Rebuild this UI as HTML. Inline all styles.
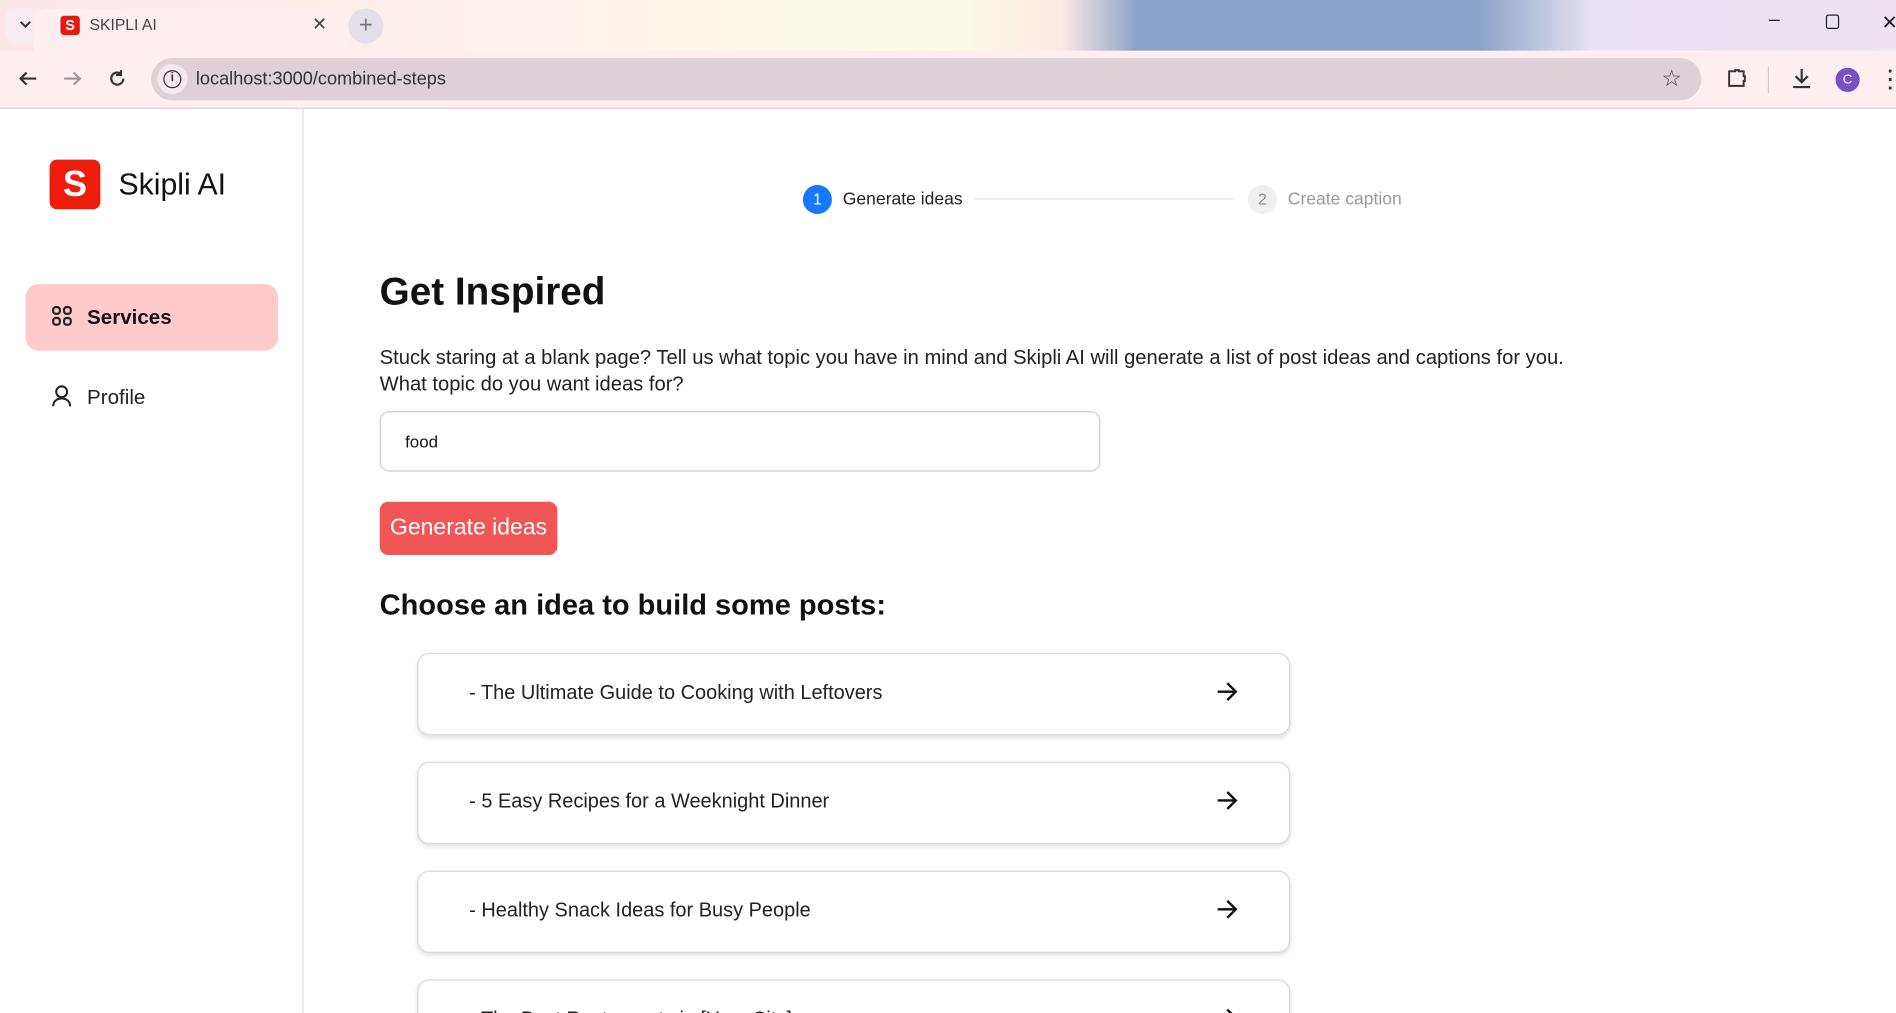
<!DOCTYPE html>
<html><head><meta charset="utf-8"><style>
*{box-sizing:border-box;margin:0;padding:0}
html,body{width:1896px;height:1013px;overflow:hidden;background:#fff;font-family:"Liberation Sans",sans-serif}
#w{width:1568px;height:838px;transform:scale(1.20918);transform-origin:0 0;position:relative;overflow:hidden}
.a{position:absolute}
.tabs{left:0;top:0;width:1568px;height:42px;background:linear-gradient(90deg,#fbe6ea 0%,#fdf3ec 30%,#f9fbe6 50%,#fde8e4 56%,#8ba3c7 60%,#8ba3c7 78%,#e9e2f3 84%,#ede3f2 100%)}
.bar{left:0;top:42px;width:1568px;height:48px;background:#fdeeef;border-bottom:1px solid #e2cdd3}
.card{left:345px;width:722px;height:68px;border:1px solid #d9d9d9;border-radius:10px;box-shadow:0 2px 4px rgba(0,0,0,.12);font-size:16.5px;color:#222;padding-left:42px;line-height:64px;background:#fff}
.card svg{position:absolute;right:42px;top:22px}
</style></head><body><div id="w">
<div class="a tabs"></div>
<div class="a" style="left:4px;top:6px;width:32px;height:30px;border-radius:10px;background:#f7ecf1"></div>
<svg class="a" style="left:15px;top:16px" width="12" height="8"><path d="M2 2l4 4 4-4" stroke="#333" stroke-width="1.6" fill="none"/></svg>
<div class="a" style="left:28px;top:7px;width:260px;height:36px;background:#fdeeef;border-radius:10px 10px 0 0"></div>
<div class="a" style="left:50px;top:13px;width:16px;height:16px;background:#e8190e;border-radius:3px;color:#fff;font-size:12px;font-weight:bold;text-align:center;line-height:16px">S</div>
<div class="a" style="left:74px;top:13px;font-size:13px;color:#444">SKIPLI AI</div>
<div class="a" style="left:258px;top:11px;font-size:15px;color:#444">✕</div>
<div class="a" style="left:288px;top:7px;width:29px;height:29px;border-radius:50%;background:#e3e0ea;color:#777;text-align:center;line-height:28px;font-size:20px">+</div>
<div class="a" style="left:1463px;top:8px;font-size:16px;color:#222">–</div>
<div class="a" style="left:1510px;top:12px;width:11px;height:12px;border:1.3px solid #222;border-radius:2px"></div>
<div class="a" style="left:1556px;top:9px;font-size:16px;color:#222">✕</div>
<div class="a bar"></div>
<svg class="a" style="left:14px;top:57px" width="18" height="16"><path d="M16 8H3M8 3L3 8l5 5" stroke="#333" stroke-width="1.8" fill="none"/></svg>
<svg class="a" style="left:51px;top:57px" width="18" height="16"><path d="M2 8h13M10 3l5 5-5 5" stroke="#999" stroke-width="1.8" fill="none"/></svg>
<svg class="a" style="left:89px;top:57px" width="16" height="16"><path d="M13 8a5 5 0 1 1-2-4M11 1v4h-4" stroke="#333" stroke-width="1.8" fill="none"/></svg>
<div class="a" style="left:125px;top:48px;width:1282px;height:35px;border-radius:18px;background:#ddd0d6"></div>
<div class="a" style="left:130px;top:53px;width:25px;height:25px;border-radius:50%;background:#f4e9ee"></div>
<div class="a" style="left:135px;top:58px;width:15px;height:15px;border-radius:50%;border:1.6px solid #333;font-size:10px;text-align:center;line-height:12px;font-weight:bold;color:#333">i</div>
<div class="a" style="left:162px;top:57px;font-size:15px;color:#333">localhost:3000/combined-steps</div>
<div class="a" style="left:1374px;top:54px;font-size:19px;color:#444">☆</div>
<svg class="a" style="left:1427px;top:56px" width="18" height="18"><path d="M3 3h5v-1h3v1h4v4h1v4h-1v4H3z" stroke="#333" stroke-width="1.6" fill="none"/></svg>
<div class="a" style="left:1462px;top:55px;width:1px;height:22px;background:#d6c8cc"></div>
<svg class="a" style="left:1481px;top:56px" width="18" height="18"><path d="M9 1v11M4 7l5 5 5-5M2 16h14" stroke="#333" stroke-width="1.8" fill="none"/></svg>
<div class="a" style="left:1518px;top:56px;width:20px;height:20px;border-radius:50%;background:#7b4fc4;color:#fff;font-size:11px;text-align:center;line-height:20px">C</div>
<div class="a" style="left:1561px;top:56px;font-size:16px;line-height:7px;color:#333;font-weight:bold">·<br>·<br>·</div>

<div class="a" style="left:250px;top:90px;width:1px;height:748px;background:#ddd"></div>
<div class="a" style="left:41px;top:132px;width:42px;height:41px;background:#ee1c0c;border-radius:6px;color:#fff;font-size:30px;font-weight:bold;text-align:center;line-height:41px">S</div>
<div class="a" style="left:98px;top:139px;font-size:25px;color:#111">Skipli AI</div>
<div class="a" style="left:21px;top:235px;width:209px;height:55px;background:#ffcaca;border-radius:11px"></div>
<svg class="a" style="left:43px;top:253px" width="17" height="17"><g stroke="#222" stroke-width="1.8" fill="none"><rect x="1" y="1" width="5.5" height="5.5" rx="2"/><rect x="10" y="1" width="5.5" height="5.5" rx="2"/><rect x="1" y="10" width="5.5" height="5.5" rx="2"/><rect x="10" y="10" width="5.5" height="5.5" rx="2"/></g></svg>
<div class="a" style="left:72px;top:253px;font-size:17px;font-weight:bold;color:#111">Services</div>
<svg class="a" style="left:42px;top:318px" width="18" height="19"><g stroke="#222" stroke-width="1.7" fill="none"><circle cx="9" cy="6" r="4.5"/><path d="M2 18c0-4 3-6.5 7-6.5s7 2.5 7 6.5"/></g></svg>
<div class="a" style="left:72px;top:319px;font-size:17px;color:#222">Profile</div>

<div class="a" style="left:664px;top:153px;width:24px;height:24px;border-radius:50%;background:#1677ff;color:#fff;font-size:13px;text-align:center;line-height:24px">1</div>
<div class="a" style="left:697px;top:157px;font-size:14.5px;color:#222">Generate ideas</div>
<div class="a" style="left:805px;top:164px;width:215px;height:1px;background:#e6e6e6"></div>
<div class="a" style="left:1032px;top:153px;width:24px;height:24px;border-radius:50%;background:#efefef;color:#888;font-size:13px;text-align:center;line-height:24px">2</div>
<div class="a" style="left:1065px;top:157px;font-size:14.5px;color:#999">Create caption</div>

<div class="a" style="left:314px;top:223px;font-size:32px;font-weight:bold;color:#111">Get Inspired</div>
<div class="a" style="left:314px;top:285px;font-size:16.7px;line-height:22px;color:#222">Stuck staring at a blank page? Tell us what topic you have in mind and Skipli AI will generate a list of post ideas and captions for you.<br>What topic do you want ideas for?</div>
<div class="a" style="left:314px;top:340px;width:596px;height:50px;border:1px solid #ccc;border-radius:8px;padding-left:20px;line-height:48px;font-size:14px;color:#111">food</div>
<div class="a" style="left:314px;top:415px;width:147px;height:44px;background:#f05656;border-radius:7px;color:#fff;font-size:19px;text-align:center;line-height:44px">Generate ideas</div>
<div class="a" style="left:314px;top:487px;font-size:24px;font-weight:bold;color:#111">Choose an idea to build some posts:</div>

<div class="a card" style="top:540px">- The Ultimate Guide to Cooking with Leftovers<svg width="18" height="18"><path d="M1 9h15M9 2l7 7-7 7" stroke="#111" stroke-width="2" fill="none"/></svg></div>
<div class="a card" style="top:630px">- 5 Easy Recipes for a Weeknight Dinner<svg width="18" height="18"><path d="M1 9h15M9 2l7 7-7 7" stroke="#111" stroke-width="2" fill="none"/></svg></div>
<div class="a card" style="top:720px">- Healthy Snack Ideas for Busy People<svg width="18" height="18"><path d="M1 9h15M9 2l7 7-7 7" stroke="#111" stroke-width="2" fill="none"/></svg></div>
<div class="a card" style="top:810px">- The Best Restaurants in [Your City]<svg width="18" height="18"><path d="M1 9h15M9 2l7 7-7 7" stroke="#111" stroke-width="2" fill="none"/></svg></div>
</div></body></html>
